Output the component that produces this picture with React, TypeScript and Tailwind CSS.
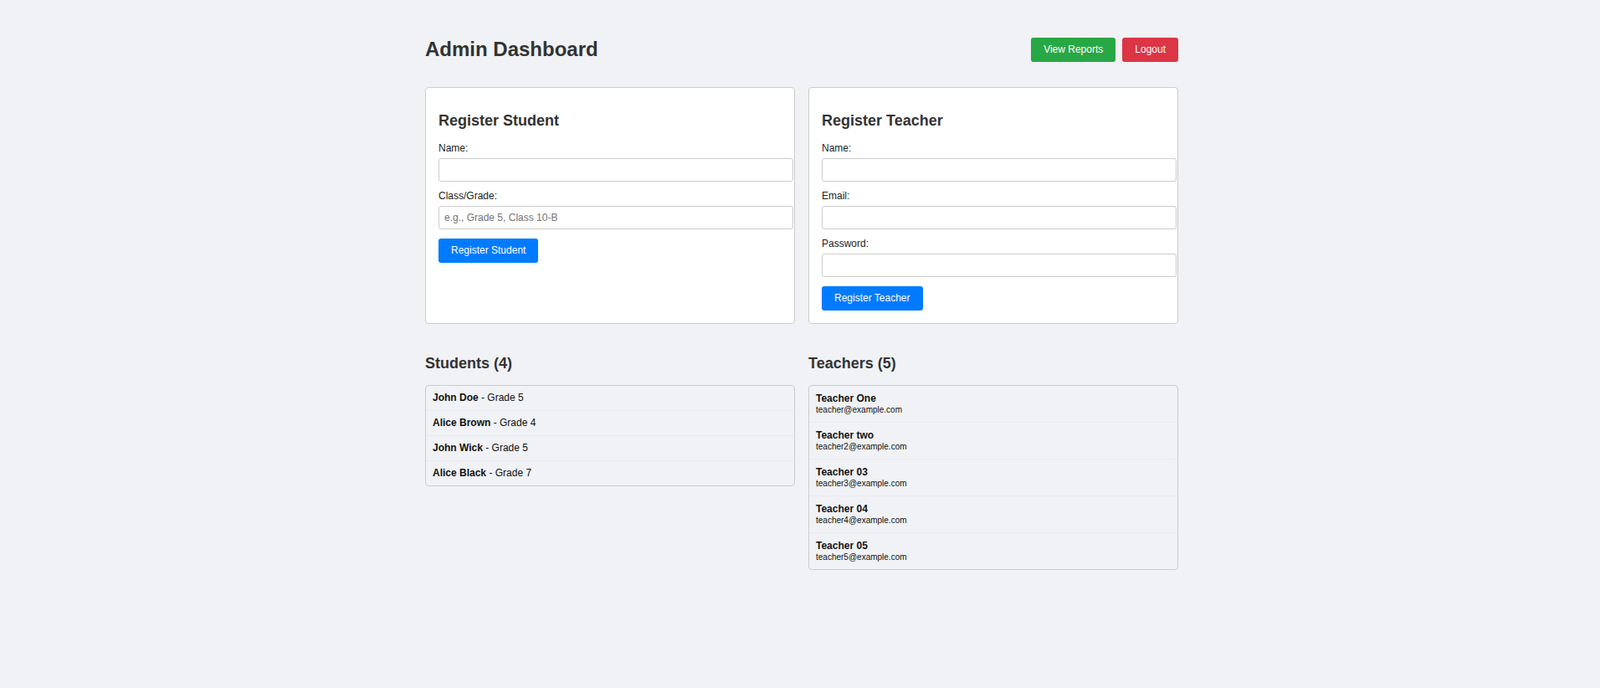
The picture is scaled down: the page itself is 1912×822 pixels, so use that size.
import React, { FC } from "react";

const students = [
  { name: "John Doe", grade: "Grade 5" },
  { name: "Alice Brown", grade: "Grade 4" },
  { name: "John Wick", grade: "Grade 5" },
  { name: "Alice Black", grade: "Grade 7" },
];

const teachers = [
  { name: "Teacher One", email: "teacher@example.com" },
  { name: "Teacher two", email: "teacher2@example.com" },
  { name: "Teacher 03", email: "teacher3@example.com" },
  { name: "Teacher 04", email: "teacher4@example.com" },
  { name: "Teacher 05", email: "teacher5@example.com" },
];

const Field: FC<{ label: string; placeholder?: string; type?: string }> = ({ label, placeholder, type = "text" }) => (
  <div className="mb-[10px]">
    <label className="block text-[12px] leading-[14px] text-[#222] mb-[5px]">{label}</label>
    <input
      type={type}
      placeholder={placeholder}
      className="box-content w-full h-[14px] px-[6px] py-[6px] text-[12px] leading-[14px] border border-[#ccc] rounded-[3px] bg-white placeholder:text-[#757575] outline-none"
    />
  </div>
);

const SubmitButton: FC<{ value: string }> = ({ value }) => (
  <button
    type="button"
    className="mt-[1px] px-[15px] py-[8px] text-[12px] leading-[13px] text-white bg-[#007bff] rounded-[3px]"
  >
    {value}
  </button>
);

const App: FC = () => {
  return (
    <div className="min-h-screen bg-[#f0f2f5] font-['Liberation_Sans',Arial,sans-serif] pb-10">
      <div className="mx-auto w-[904px] pl-[4px] pt-[45px]">
        <div className="flex flex-row items-start justify-between">
          <h1 className="text-[24px] leading-[28px] font-bold text-[#333]">Admin Dashboard</h1>
          <div className="flex flex-row gap-[8px]">
            <button type="button" className="px-[15px] py-[8px] text-[12px] leading-[13px] text-white bg-[#28a745] rounded-[3px]">
              View Reports
            </button>
            <button type="button" className="px-[15px] py-[8px] text-[12px] leading-[13px] text-white bg-[#dc3545] rounded-[3px]">
              Logout
            </button>
          </div>
        </div>

        <div className="grid grid-cols-2 gap-[16px] mt-[30px]">
          <div className="bg-white border border-[#ccc] rounded-[4px] p-[15px]">
            <h3 className="mt-[14px] mb-[15px] text-[18px] leading-[21px] font-bold text-[#333]">Register Student</h3>
            <Field label="Name:" />
            <Field label="Class/Grade:" placeholder="e.g., Grade 5, Class 10-B" />
            <SubmitButton value="Register Student" />
          </div>
          <div className="bg-white border border-[#ccc] rounded-[4px] p-[15px]">
            <h3 className="mt-[14px] mb-[15px] text-[18px] leading-[21px] font-bold text-[#333]">Register Teacher</h3>
            <Field label="Name:" />
            <Field label="Email:" type="email" />
            <Field label="Password:" type="password" />
            <SubmitButton value="Register Teacher" />
          </div>
        </div>

        <div className="grid grid-cols-2 gap-[16px] mt-[37px] items-start">
          <div>
            <h3 className="text-[18px] leading-[21px] font-bold text-[#333] mb-[15px]">Students ({students.length})</h3>
            <ul className="border border-[#ccc] rounded-[4px]">
              {students.map((s, i) => (
                <li
                  key={s.name}
                  className={`px-[8px] py-[8px] text-[12px] leading-[13px] text-[#111] ${i < students.length - 1 ? "border-b border-[#eaebee]" : ""}`}
                >
                  <strong>{s.name}</strong> - {s.grade}
                </li>
              ))}
            </ul>
          </div>
          <div>
            <h3 className="text-[18px] leading-[21px] font-bold text-[#333] mb-[15px]">Teachers ({teachers.length})</h3>
            <ul className="border border-[#ccc] rounded-[4px]">
              {teachers.map((t, i) => (
                <li
                  key={t.name}
                  className={`px-[8px] pt-[8px] pb-[8px] text-[#111] ${i < teachers.length - 1 ? "border-b border-[#eaebee]" : ""}`}
                >
                  <div className="text-[12px] leading-[14px] font-bold">{t.name}</div>
                  <div className="text-[10px] leading-[13px]">{t.email}</div>
                </li>
              ))}
            </ul>
          </div>
        </div>
      </div>
    </div>
  );
};

export default App;
